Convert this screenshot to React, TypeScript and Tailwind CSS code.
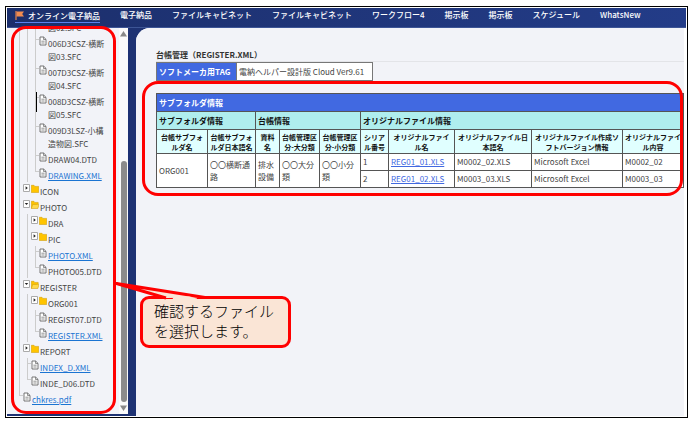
import { Fragment } from "react";

interface TreeNode {
  label: string;
  kind: "file" | "closed" | "open" | "rest";
  level: 0 | 1 | 2;
  link?: boolean;
  last?: boolean;
  caret?: boolean;
}

const NAV_ITEMS = [
  "電子納品",
  "ファイルキャビネット",
  "ファイルキャビネット",
  "ワークフロー4",
  "掲示板",
  "掲示板",
  "スケジュール",
  "WhatsNew",
];

const TREE: TreeNode[] = [
  { label: "図02.SFC", kind: "rest", level: 2 },
  { label: "006D3CSZ-横断\n図03.SFC", kind: "file", level: 2 },
  { label: "007D3CSZ-横断\n図04.SFC", kind: "file", level: 2 },
  { label: "008D3CSZ-横断\n図05.SFC", kind: "file", level: 2, caret: true },
  { label: "009D3LSZ-小構\n造物図.SFC", kind: "file", level: 2 },
  { label: "DRAW04.DTD", kind: "file", level: 2 },
  { label: "DRAWING.XML", kind: "file", level: 2, link: true, last: true },
  { label: "ICON", kind: "closed", level: 1 },
  { label: "PHOTO", kind: "open", level: 1 },
  { label: "DRA", kind: "closed", level: 2 },
  { label: "PIC", kind: "closed", level: 2 },
  { label: "PHOTO.XML", kind: "file", level: 2, link: true },
  { label: "PHOTO05.DTD", kind: "file", level: 2, last: true },
  { label: "REGISTER", kind: "open", level: 1 },
  { label: "ORG001", kind: "closed", level: 2 },
  { label: "REGIST07.DTD", kind: "file", level: 2 },
  { label: "REGISTER.XML", kind: "file", level: 2, link: true, last: true },
  { label: "REPORT", kind: "closed", level: 1 },
  { label: "INDEX_D.XML", kind: "file", level: 1, link: true },
  { label: "INDE_D06.DTD", kind: "file", level: 1, last: true },
  { label: "chkres.pdf", kind: "file", level: 0, link: true, last: true },
];

const COLUMNS = [
  { label: "台帳サブフォルダ名", width: "w-[51px]" },
  { label: "台帳サブフォルダ日本語名", width: "w-[48px]" },
  { label: "資料名", width: "w-[24px]" },
  { label: "台帳管理区分-大分類", width: "w-[40px]" },
  { label: "台帳管理区分-小分類", width: "w-[41px]" },
  { label: "シリアル番号", width: "w-[28px]" },
  { label: "オリジナルファイル名", width: "w-[66px]" },
  { label: "オリジナルファイル日本語名", width: "w-[77px]" },
  { label: "オリジナルファイル作成ソフトバージョン情報", width: "w-[91px]" },
  { label: "オリジナルファイル内容", width: "" },
];

const FILES = [
  { no: 1, name: "REG01_01.XLS", jp: "M0002_02.XLS", app: "Microsoft Excel", note: "M0002_02" },
  { no: 2, name: "REG01_02.XLS", jp: "M0003_03.XLS", app: "Microsoft Excel", note: "M0003_03" },
];

function FileIcon() {
  return (
    <svg className="mt-[2px] h-[10px] w-2 shrink-0" viewBox="0 0 8 10" fill="none" stroke="#666" strokeWidth="0.9">
      <path d="M1 1h3.6L7 3.4V9H1z" fill="#fff" />
      <path d="M4.5 1v2.5H7M2.4 5.2h3.2M2.4 7h3.2" strokeWidth="0.7" />
    </svg>
  );
}

function FolderIcon({ open }: { open: boolean }) {
  return (
    <svg className="mt-[2px] h-[10px] w-2 shrink-0" viewBox="0 0 8 10" stroke="#c99700" strokeWidth="0.5">
      {open ? (
        <>
          <path d="M.3 8.5V1.3h2.6l.9 1.1h3.4v1.8" fill="#ffc400" />
          <path d="M.3 8.5 1.7 4.4H8L6.9 8.5z" fill="#ffd94d" />
        </>
      ) : (
        <path d="M.3 8.5V1.3h2.7l.9 1.1h3.8v6.1z" fill="#ffc400" />
      )}
    </svg>
  );
}

function Toggle({ open }: { open: boolean }) {
  return (
    <svg className="mt-[2px] h-2 w-2 shrink-0" viewBox="0 0 8 8">
      <path d="M.5 .5h6v7h-6z" fill="#fff" stroke="#aaa" />
      <path d={open ? "M1.8 3h3.4L3.5 5z" : "M2.6 2.2v3.6L4.8 4z"} fill="#222" />
    </svg>
  );
}

// One 8px column of connector lines
function Guide({ elbow, last }: { elbow: boolean; last?: boolean }) {
  return (
    <span className="flex w-2 shrink-0 flex-col pl-1">
      <span className={`h-[6px] border-l border-[#ccc] ${elbow ? "border-b" : ""}`} />
      <span className={last ? "" : "flex-1 border-l border-[#ccc]"} />
    </span>
  );
}

function TreeRow({ node }: { node: TreeNode }) {
  const isFolder = node.kind === "closed" || node.kind === "open";
  const parents = Array.from({ length: node.level }, (_, i) => i);
  return (
    <li className="relative flex shrink-0">
      {parents.map((i) => (
        <Guide key={i} elbow={false} />
      ))}
      {isFolder ? (
        <>
          <Toggle open={node.kind === "open"} />
          <FolderIcon open={node.kind === "open"} />
        </>
      ) : (
        <>
          <Guide elbow={node.kind === "file"} last={node.last} />
          {node.kind === "file" ? <FileIcon /> : <span className="w-2" />}
        </>
      )}
      <span className="ml-px whitespace-pre pt-[3px] leading-[13px]">
        {node.link ? (
          <a href="#" className="text-[#1b74d2] underline">{node.label}</a>
        ) : (
          node.label
        )}
      </span>
      {node.caret && <span className="absolute left-[21px] top-0 h-5 w-px bg-black" />}
    </li>
  );
}

function Sidebar() {
  return (
    <aside className="relative mb-[2px] flex w-[121px] shrink-0 bg-[#f2f3f8]">
      <ul className="flex min-w-0 flex-1 flex-col justify-end overflow-hidden pb-2 pl-2 text-[8px] text-[#444]">
        {TREE.map((node) => (
          <TreeRow key={node.label} node={node} />
        ))}
      </ul>
      <div className="flex w-[9px] flex-col items-center gap-[3px] bg-[#fafafa] py-[3px]">
        <svg className="h-[6px] w-[7px]" viewBox="0 0 7 6"><path d="M3.5 0 7 5.5H0z" fill="#888" /></svg>
        <div className="mt-[121px] w-[6px] flex-1 rounded-full bg-[#8b8b8b]" />
        <svg className="h-[6px] w-[7px]" viewBox="0 0 7 6"><path d="M3.5 6 7 .5H0z" fill="#888" /></svg>
      </div>
      <div className="pointer-events-none absolute -top-[2px] bottom-0 left-1 right-[12px] rounded-[15px] border-3 border-[#f00]" />
    </aside>
  );
}

function RegisterTable() {
  return (
    <table className="w-full table-fixed border-collapse text-[8px] text-[#444] [&_td]:border [&_td]:border-[#555] [&_td]:px-[2px] [&_th]:border [&_th]:border-[#555] [&_th]:px-[2px]">
      <colgroup>
        {COLUMNS.map((col) => (
          <col key={col.label} className={col.width} />
        ))}
      </colgroup>
      <thead>
        <tr className="h-[18px] bg-[#4169e1] text-left leading-3 text-white">
          <th colSpan={10}>サブフォルダ情報</th>
        </tr>
        <tr className="h-[18px] bg-[#afeeee] text-left leading-3 text-[#111]">
          <th colSpan={2}>サブフォルダ情報</th>
          <th colSpan={3}>台帳情報</th>
          <th colSpan={5}>オリジナルファイル情報</th>
        </tr>
        <tr className="h-[24px] bg-[#e0ffff] text-[7px] leading-[10px] text-[#111]">
          {COLUMNS.map((col) => (
            <th key={col.label}>{col.label}</th>
          ))}
        </tr>
      </thead>
      <tbody className="bg-white leading-3">
        {FILES.map((file, i) => (
          <tr key={file.no} className="h-[17px]">
            {i === 0 && (
              <Fragment>
                <td rowSpan={2}>ORG001</td>
                <td rowSpan={2}>〇〇横断通路</td>
                <td rowSpan={2}>排水設備</td>
                <td rowSpan={2}>〇〇大分類</td>
                <td rowSpan={2}>〇〇小分類</td>
              </Fragment>
            )}
            <td>{file.no}</td>
            <td><a href="#" className="text-[#4169e1] underline">{file.name}</a></td>
            <td>{file.jp}</td>
            <td>{file.app}</td>
            <td>{file.note}</td>
          </tr>
        ))}
      </tbody>
    </table>
  );
}

function Callout() {
  return (
    <div className="absolute left-[140px] top-[296px] rounded-[9px] border-3 border-[#f00] bg-[#fae5d6] pb-1 pl-[11px] pr-[14px] pt-[2px]">
      <p className="whitespace-nowrap text-[15px] font-light leading-5 text-black">
        確認するファイル
        <br />
        を選択します。
      </p>
      <svg className="absolute -left-[28px] -top-[17px] h-[18px] w-[92px]" viewBox="0 0 92 18">
        <path d="M51 16 1.5 1.5 90 15.500" fill="#fae5d6" stroke="#f00" strokeWidth="3" strokeLinejoin="round" />
        <path d="M59 14.500h15l8 2v1.500H57z" fill="#fae5d6" />
      </svg>
    </div>
  );
}

export default function App() {
  return (
    <div className="relative flex h-screen bg-white pb-[5px] pl-[5px] pr-[7px] pt-[6px] font-['Noto_Sans_CJK_JP',sans-serif]">
      <div className="flex min-w-0 flex-1 flex-col border border-black bg-white p-px">
        <nav className="flex h-5 shrink-0 items-start gap-5 whitespace-nowrap border-b border-[#3d5596] bg-linear-to-r from-[#1c2f6c] to-[#233c88] pl-2 text-[8px] font-medium leading-[13px] text-white">
          <a href="#" className="flex h-[15px] items-center gap-1 border-b border-[#5b82ee]">
            <svg className="h-[9px] w-[9px]" viewBox="0 0 9 9">
              <path d="M1 0v9" stroke="#e8834a" strokeWidth="1.200" />
              <path d="M1.500.5H9L7.200 3 9 5.500H1.500z" fill="#f28c50" />
            </svg>
            オンライン電子納品
          </a>
          {NAV_ITEMS.map((item, i) => (
            <a key={i} href="#">{item}</a>
          ))}
        </nav>
        <div className="flex min-h-0 flex-1 bg-[#1e3273]">
          <Sidebar />
          <div className="ml-2 flex min-w-0 flex-1 rounded-tl-[14px] bg-white">
            <main className="mr-[2px] min-w-0 flex-1 rounded-tl-[14px] bg-[#f2f3f8] pl-5 pt-[21px]">
              <h1 className="border-b border-[#e3e4e8] text-[8px] font-bold leading-3 text-[#333]">
                台帳管理（REGISTER.XML）
              </h1>
              <table className="border-collapse whitespace-nowrap text-[8px] leading-3">
                <tbody>
                  <tr className="h-[18px]">
                    <th className="w-[80px] border border-[#777] bg-[#4169e1] px-[2px] text-left text-white">
                      ソフトメーカ用TAG
                    </th>
                    <td className="w-[136px] border border-[#777] bg-white px-[2px] text-[#444]">
                      電納ヘルパー設計版 Cloud Ver9.61
                    </td>
                  </tr>
                </tbody>
              </table>
              <section className="relative mt-3">
                <RegisterTable />
                <div className="pointer-events-none absolute -bottom-2 -left-[14px] -top-3 right-px rounded-[16px] border-3 border-[#f00]" />
              </section>
            </main>
          </div>
        </div>
      </div>
      <Callout />
    </div>
  );
}
